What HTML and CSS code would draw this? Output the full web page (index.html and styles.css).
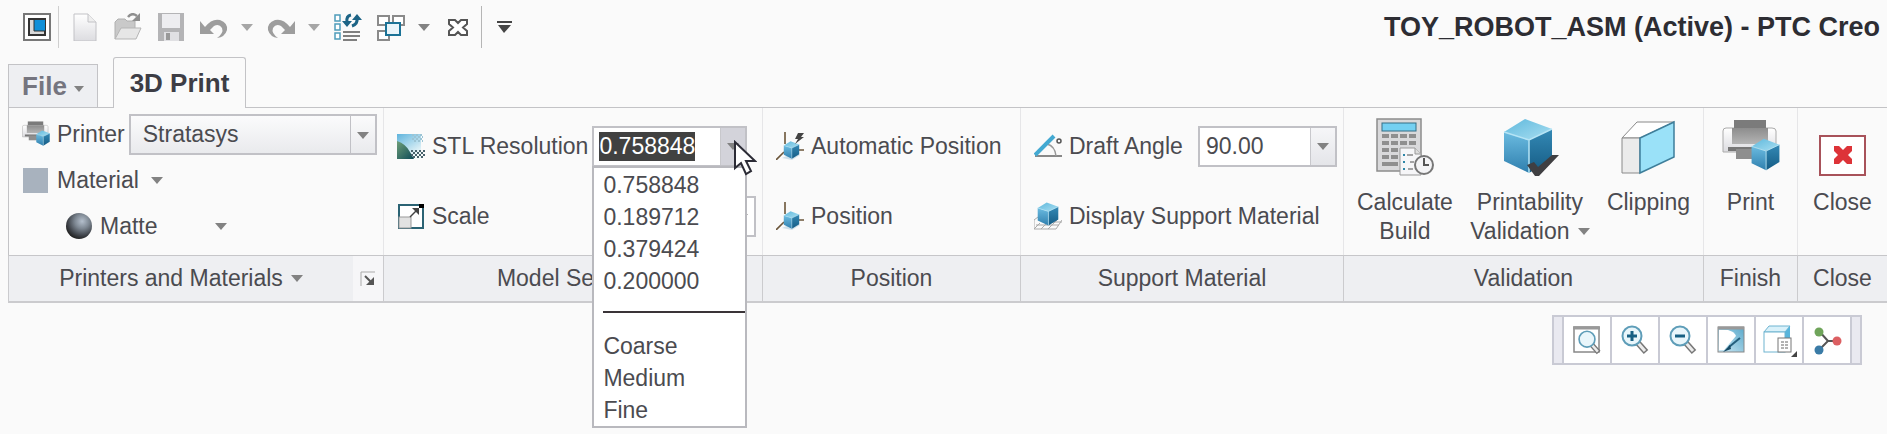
FILE: index.html
```html
<!DOCTYPE html>
<html lang="en">
<head>
  <meta charset="UTF-8">
  <title>TOY_ROBOT_ASM (Active) - PTC Creo</title>
  <link rel="stylesheet" href="styles.css">
</head>
<body>

<!-- shared shapes -->
<svg class="defs" aria-hidden="true">
  <defs>
    <linearGradient id="gTop" x1="0" y1="0" x2="1" y2="1"><stop offset="0" stop-color="#5fb8dc"/><stop offset="1" stop-color="#a9dff2"/></linearGradient>
    <linearGradient id="gLeft" x1="0" y1="0" x2="0" y2="1"><stop offset="0" stop-color="#6bbbe0"/><stop offset="1" stop-color="#2f7fae"/></linearGradient>
    <linearGradient id="gRight" x1="0" y1="0" x2="0" y2="1"><stop offset="0" stop-color="#3489b5"/><stop offset="1" stop-color="#155c85"/></linearGradient>
    <linearGradient id="gGrey" x1="0" y1="0" x2="0" y2="1"><stop offset="0" stop-color="#8d8d8d"/><stop offset="1" stop-color="#b4b4b4"/></linearGradient>
    <linearGradient id="gLight" x1="0" y1="0" x2="0" y2="1"><stop offset="0" stop-color="#ffffff"/><stop offset="1" stop-color="#dcdce0"/></linearGradient>
    <linearGradient id="gSky" x1="0" y1="0" x2="0.6" y2="1"><stop offset="0" stop-color="#5fb4dd"/><stop offset="1" stop-color="#f2fafa"/></linearGradient>
    <linearGradient id="gHill" x1="0" y1="0" x2="1" y2="1"><stop offset="0" stop-color="#6f9f78"/><stop offset="1" stop-color="#0d4a58"/></linearGradient>
    <linearGradient id="gPane" x1="0" y1="1" x2="1" y2="0"><stop offset="0" stop-color="#cfeaf5"/><stop offset="1" stop-color="#5aa9cb"/></linearGradient>
    <radialGradient id="gBall" cx="0.62" cy="0.32" r="0.7"><stop offset="0" stop-color="#b4bfcc"/><stop offset="0.4" stop-color="#7d8792"/><stop offset="0.8" stop-color="#3c4046"/><stop offset="1" stop-color="#222"/></radialGradient>
    <symbol id="cube" viewBox="0 0 50 56">
      <path d="M22 1 49 11 26 22 1 14Z" fill="url(#gTop)"/>
      <path d="M1 14 26 22V55L1 43Z" fill="url(#gLeft)"/>
      <path d="M26 22 49 11V41L26 55Z" fill="url(#gRight)"/>
      <path d="M1 14 26 22 49 11M26 22V55" fill="none" stroke="#b5e4f5" stroke-width="1.5"/>
    </symbol>
    <symbol id="printer" viewBox="0 0 58 52">
      <path d="M1 11Q1 8 4 8H50Q54 8 54 11V32H1Z" fill="url(#gLight)" stroke="#aaa"/>
      <rect x="12" y="0" width="32" height="8" fill="#7b7b7b"/>
      <rect x="10" y="8" width="36" height="16" fill="url(#gGrey)"/>
      <rect x="6" y="27" width="40" height="4" fill="#777"/>
      <rect x="14" y="29" width="28" height="10" fill="#8e8e8e"/>
      <use href="#cube" x="29" y="18" width="29" height="33"/>
    </symbol>
    <symbol id="lens" viewBox="0 0 30 30">
      <path d="M18 18 26 27" stroke="#777" stroke-width="6"/>
      <path d="M18 18 25 26" stroke="#ececec" stroke-width="3"/>
      <circle cx="12" cy="11" r="9.5" fill="#e9f6fb" stroke="#5e9db8" stroke-width="2"/>
    </symbol>
    <symbol id="axes" viewBox="0 0 28 28">
      <path d="M9 0V12M0 28 8 20M20 18H28" stroke="#6b563a" stroke-width="1.6" fill="none"/>
      <path d="M6 26 16 28 24 23 20 20Z" fill="#cfe0ea"/>
      <use href="#cube" x="7" y="9" width="17" height="18"/>
    </symbol>
    <symbol id="turn" viewBox="0 0 28 28">
      <path d="M5 14Q12 5 20 7Q28 10 27 17Q25 24 17 25Q24 20 22 15Q19 10 14 13L10 17L14 21H0V8Z" fill="#9d9d9d"/>
    </symbol>
  </defs>
</svg>

<header class="topbar">
  <div class="quick">
    <button type="button" class="qbtn" aria-label="Window">
      <svg width="28" height="28" viewBox="0 0 28 28"><rect x="1" y="1" width="26" height="26" fill="#fff" stroke="#777" stroke-width="2"/><rect x="6" y="6" width="16" height="16" fill="#d9d9d9" stroke="#333" stroke-width="2"/><rect x="11" y="7" width="11" height="11" fill="#0f8fd8"/><path d="M11 6V18H22" fill="none" stroke="#333"/></svg>
    </button>
    <span class="sep"></span>
    <button type="button" class="qbtn" aria-label="New">
      <svg width="28" height="28" viewBox="0 0 28 28"><path d="M3 1H17L25 9V28H3Z" fill="url(#gLight)" stroke="#c2c2c6"/><path d="M17 1V9H25" fill="#eee" stroke="#c2c2c6"/></svg>
    </button>
    <button type="button" class="qbtn" aria-label="Open">
      <svg width="28" height="28" viewBox="0 0 28 28"><path d="M1 26V9L4 6H11L13 8H21V15" fill="#c9c9c9" stroke="#b0b0b0"/><path d="M1 26 7 15H27L22 26Z" fill="#e6e6e6" stroke="#b5b5b5"/><path d="M14 4Q18 -1 23 3" fill="none" stroke="#8f8f8f" stroke-width="2.500"/><path d="M26 0V8H18Z" fill="#8f8f8f"/></svg>
    </button>
    <button type="button" class="qbtn" aria-label="Save">
      <svg width="28" height="28" viewBox="0 0 28 28"><path d="M1 0H27V28H1Z" fill="#b4b4b6"/><rect x="5" y="1" width="18" height="14" fill="#ededf0"/><rect x="7" y="19" width="15" height="9" fill="#e0e0e3"/><rect x="9" y="20" width="4" height="7" fill="#999"/></svg>
    </button>
    <button type="button" class="qbtn" aria-label="Undo">
      <svg width="28" height="28" viewBox="0 0 28 28"><use href="#turn" width="28" height="28"/></svg>
    </button>
    <button type="button" class="qdrop" aria-label="Undo list"><span class="caret light"></span></button>
    <button type="button" class="qbtn" aria-label="Redo">
      <svg width="28" height="28" viewBox="0 0 28 28"><g transform="matrix(-1 0 0 1 28 0)"><use href="#turn" width="28" height="28"/></g></svg>
    </button>
    <button type="button" class="qdrop" aria-label="Redo list"><span class="caret light"></span></button>
    <button type="button" class="qbtn" aria-label="Regenerate">
      <svg width="28" height="28" viewBox="0 0 28 28"><g fill="#fff" stroke="#4e9cba" stroke-width="1.500"><rect x="1" y="2" width="5" height="6"/><rect x="1" y="11" width="5" height="6"/><rect x="1" y="20" width="5" height="6"/></g><path d="M9 19H26M9 23H26M9 27H23" stroke="#7f7f7f" stroke-width="2"/><path d="M13 9Q12 3 17 2M23 5Q24 11 18 13" fill="none" stroke="#1d6486" stroke-width="3"/><path d="M8 8H18L13 14ZM18 7H28L23 1Z" fill="#1d6486"/></svg>
    </button>
    <button type="button" class="qbtn" aria-label="Windows">
      <svg width="28" height="28" viewBox="0 0 28 28"><g fill="#fff" stroke="#8a8a8a" stroke-width="2"><rect x="1" y="3" width="11" height="9"/><rect x="16" y="3" width="11" height="9"/><rect x="1" y="18" width="11" height="9"/></g><rect x="9" y="10" width="14" height="12" fill="#eaf5fa" stroke="#1b7296" stroke-width="2"/></svg>
    </button>
    <button type="button" class="qdrop" aria-label="Window list"><span class="caret"></span></button>
    <button type="button" class="qbtn" aria-label="Close window">
      <svg width="28" height="28" viewBox="0 0 28 28"><path d="M5 7H11L14 10 17 7H23V11L19 14.500 23 18V22H17L14 19 11 22H5V18L9 14.500 5 11Z" fill="#fff" stroke="#555" stroke-width="2"/></svg>
    </button>
    <span class="sep last"></span>
    <button type="button" class="qdrop" aria-label="Customize toolbar">
      <svg width="18" height="14" viewBox="0 0 18 14"><path d="M2 2H17" stroke="#444" stroke-width="2"/><path d="M3 5H16L9 13Z" fill="#444"/></svg>
    </button>
  </div>
  <h1 class="title">TOY_ROBOT_ASM (Active) - PTC Creo</h1>
</header>

<nav class="tabs">
  <button type="button" class="tab file">File<span class="caret small"></span></button>
  <button type="button" class="tab active">3D Print</button>
</nav>

<main>
  <div class="ribbon">
    <section class="group first">
      <div class="body">
        <div class="row short">
          <label class="item" for="printer-name">
            <svg width="28" height="28" viewBox="0 0 58 58"><use href="#printer" width="58" height="58"/></svg>Printer
          </label>
          <span class="combo wide grey">
            <select id="printer-name"><option>Stratasys</option></select>
          </span>
        </div>
        <div class="row short">
          <button type="button" class="item"><span class="swatch"></span>Material<span class="caret after"></span></button>
        </div>
        <div class="row short indent">
          <button type="button" class="item">
            <svg width="28" height="28" viewBox="0 0 28 28"><circle cx="14" cy="14" r="13" fill="url(#gBall)"/></svg><span class="finish">Matte</span><span class="caret"></span>
          </button>
        </div>
      </div>
      <div class="foot">
        <button type="button" class="foot-label">Printers and Materials<span class="caret"></span></button>
        <button type="button" class="launcher" aria-label="More printer settings">
          <svg width="16" height="16" viewBox="0 0 16 16"><path d="M1 15V1H15" fill="none" stroke="#aaa"/><path d="M5 5 11 11" stroke="#555" stroke-width="2"/><path d="M14 6V14H6Z" fill="#555"/></svg>
        </button>
      </div>
    </section>

    <section class="group">
      <div class="body">
        <div class="row">
          <label class="item" for="stl">
            <svg width="28" height="28" viewBox="0 0 28 28"><rect y="2" width="24" height="25" fill="url(#gSky)"/><path d="M0 9Q9 12 13 20L17 27H0Z" fill="url(#gHill)"/><g stroke="#48626c" stroke-dasharray="2 2"><path d="M15 3H26M15 7H26M17 5H26M17 9H26" stroke="#9cc4d4" stroke-width="2"/><path d="M14 19H28M16 21H28M14 23H28M16 25H28" stroke-width="2"/></g></svg>STL Resolution
          </label>
          <span class="combo stl">
            <input type="text" id="stl" value="0.758848">
            <button type="button" class="combo-btn" aria-label="Show resolutions"><span class="caret"></span></button>
            <ul class="list" role="listbox" aria-label="STL Resolution">
              <li role="option">0.758848</li>
              <li role="option">0.189712</li>
              <li role="option">0.379424</li>
              <li role="option">0.200000</li>
              <li class="rule" role="separator"></li>
              <li role="option">Coarse</li>
              <li role="option">Medium</li>
              <li role="option">Fine</li>
            </ul>
            <svg class="pointer" width="24" height="36" viewBox="0 0 24 36"><path d="M2 2V28L8 23 13 34 18 31 13 21H22Z" fill="#fff" stroke="#2c2c36" stroke-width="2"/></svg>
          </span>
        </div>
        <div class="row">
          <label class="item" for="scale">
            <svg width="28" height="28" viewBox="0 0 28 28"><rect x="2" y="3" width="24" height="23" fill="#fff" stroke="#2b6374" stroke-width="2"/><rect x="2" y="15" width="12" height="11" fill="#e2e2e2" stroke="#999"/><path d="M13 15 20 8" stroke="#444" stroke-width="1.500"/><path d="M15 6H22V13Z" fill="#444"/><rect x="22" y="2" width="5" height="4" fill="#000"/></svg>Scale
          </label>
          <span class="combo stl end">
            <select id="scale"></select>
          </span>
        </div>
      </div>
      <div class="foot"><span class="foot-label">Model Settings</span></div>
    </section>

    <section class="group">
      <div class="body">
        <div class="row">
          <button type="button" class="item">
            <svg width="28" height="28" viewBox="0 0 28 28"><use href="#axes" width="28" height="28"/><path d="M22 1H28L25 5H28L19 12 22 7H19Z" fill="#444"/></svg>Automatic Position
          </button>
        </div>
        <div class="row">
          <button type="button" class="item">
            <svg width="28" height="28" viewBox="0 0 28 28"><use href="#axes" width="28" height="28"/></svg>Position
          </button>
        </div>
      </div>
      <div class="foot"><span class="foot-label">Position</span></div>
    </section>

    <section class="group">
      <div class="body">
        <div class="row">
          <label class="item" for="draft">
            <svg width="28" height="28" viewBox="0 0 28 28"><path d="M1 24H28" stroke="#888" stroke-width="2"/><path d="M13 12Q21 14 22 24" fill="none" stroke="#999" stroke-width="1.500"/><path d="M1 23 20 4" stroke="#43a9d2" stroke-width="4"/><circle cx="25" cy="9" r="2" fill="none" stroke="#555" stroke-width="1.500"/></svg>Draft Angle
          </label>
          <span class="combo draft end">
            <input type="text" id="draft" value="90.00">
            <button type="button" class="combo-btn" aria-label="Show angles"><span class="caret"></span></button>
          </span>
        </div>
        <div class="row">
          <button type="button" class="item">
            <svg width="28" height="28" viewBox="0 0 28 28"><path d="M4 15 0 18V27H22L28 18M0 27 6 21M7 27 14 20M14 27 24 17M2 23H25M18 20H28" fill="none" stroke="#aaa"/><use href="#cube" x="1" y="0" width="26" height="24"/></svg>Display Support Material
          </button>
        </div>
      </div>
      <div class="foot"><span class="foot-label">Support Material</span></div>
    </section>

    <section class="group">
      <div class="body tools">
        <button type="button" class="tool">
          <svg width="58" height="58" viewBox="0 0 58 58">
            <rect x="1" y="1" width="44" height="52" fill="#d9d9db" stroke="#8c8c8c" stroke-width="1.500"/>
            <rect x="6" y="5" width="34" height="8" fill="#74d0f2" stroke="#356e86"/>
            <g fill="#8f8f8f"><path d="M6 16h7v4H6zM15 16h7v4h-7zM24 16h7v4h-7zM33 16h7v4h-7zM6 23h7v4H6zM15 23h7v4h-7zM24 23h7v4h-7zM33 23h7v4h-7zM6 30h7v4H6zM15 30h7v4h-7zM6 37h7v4H6zM15 37h7v4h-7zM6 44h16v4H6z"/></g>
            <path d="M24 30H39L45 36V57H24Z" fill="#f6f6f8" stroke="#999"/><path d="M39 30V36H45" fill="#ddd" stroke="#999"/>
            <path d="M27 37H29M27 44H29M27 51H29" stroke="#2e86a8" stroke-width="2"/><path d="M31 37H37M34 44H38M32 51H37" stroke="#888" stroke-width="1.500"/>
            <circle cx="48" cy="47" r="9" fill="#f4f4f6" stroke="#777" stroke-width="2"/><path d="M48 40V47H53" fill="none" stroke="#555" stroke-width="2"/>
          </svg>
          <span>Calculate<br>Build</span>
        </button>
        <button type="button" class="tool">
          <svg width="58" height="58" viewBox="0 0 58 58"><use href="#cube" x="2" y="0" width="50" height="56"/><path d="M26 47 33 44 37 49 51 37H58L38 58H34Z" fill="#3f3f42"/></svg>
          <span>Printability<br>Validation<span class="caret inline"></span></span>
        </button>
        <button type="button" class="tool">
          <svg width="58" height="58" viewBox="0 0 58 58"><path d="M3 20 18 4H55L21 20Z" fill="#fff" stroke="#8a8a8a"/><path d="M3 20H21V55H3Z" fill="#ebebeb" stroke="#8a8a8a"/><path d="M21 20 55 4V39L21 55Z" fill="#9ae1f8" stroke="#3e7e9a" stroke-width="1.500"/></svg>
          <span>Clipping</span>
        </button>
      </div>
      <div class="foot"><span class="foot-label">Validation</span></div>
    </section>

    <section class="group">
      <div class="body tools single">
        <button type="button" class="tool">
          <svg width="58" height="58" viewBox="0 0 58 58"><use href="#printer" y="2" width="58" height="52"/></svg>
          <span>Print</span>
        </button>
      </div>
      <div class="foot"><span class="foot-label">Finish</span></div>
    </section>

    <section class="group">
      <div class="body tools single">
        <button type="button" class="tool">
          <svg width="58" height="58" viewBox="0 0 58 58"><rect x="6" y="18" width="45" height="39" fill="#fff" stroke="#a8525a" stroke-width="2"/><path d="M20 28H25L29 32 33 28H38V33L34 37 38 41V46H33L29 42 25 46H20V41L24 37 20 33Z" fill="#dd3338"/></svg>
          <span>Close</span>
        </button>
      </div>
      <div class="foot"><span class="foot-label">Close</span></div>
    </section>
  </div>

  <div class="canvas">
    <div class="view-bar" role="toolbar" aria-label="View">
      <span class="grip"></span>
      <button type="button" aria-label="Refit">
        <svg width="30" height="30" viewBox="0 0 30 30"><rect x="2" y="2" width="25" height="25" fill="#fff" stroke="#888" stroke-width="1.500"/><path d="M1 3H28" stroke="#999" stroke-width="3"/><use href="#lens" x="5" y="5" width="25" height="25"/></svg>
      </button>
      <button type="button" aria-label="Zoom in">
        <svg width="30" height="30" viewBox="0 0 30 30"><use href="#lens" width="30" height="30"/><path d="M12 6V16M7 11H17" stroke="#186083" stroke-width="3"/></svg>
      </button>
      <button type="button" aria-label="Zoom out">
        <svg width="30" height="30" viewBox="0 0 30 30"><use href="#lens" width="30" height="30"/><path d="M7 11H17" stroke="#186083" stroke-width="3"/></svg>
      </button>
      <button type="button" aria-label="Repaint">
        <svg width="30" height="30" viewBox="0 0 30 30"><rect x="2" y="2" width="26" height="25" fill="url(#gPane)" stroke="#888"/><path d="M2 3H28" stroke="#999" stroke-width="3"/><path d="M3 5H12Q19 7 20 11L8 25H3Z" fill="#fff"/><path d="M24 13 13 22" stroke="#245f7d" stroke-width="2"/><path d="M14 20 15 24 7 27Z" fill="#174a65"/></svg>
      </button>
      <button type="button" aria-label="Display style">
        <svg width="36" height="34" viewBox="0 0 36 34"><path d="M3 9 8 3H29L24 9Z" fill="#d9f1fa" stroke="#6fb4d0"/><path d="M24 9 29 3V24L24 29Z" fill="#58b5dc"/><rect x="3" y="9" width="21" height="20" fill="#fff" stroke="#6fb4d0"/><rect x="17" y="15" width="13" height="14" fill="#fff" stroke="#777"/><path d="M20 19H27M20 22H27M20 25H27" stroke="#666" stroke-dasharray="3 1"/><path d="M36 28V34H30Z" fill="#444"/></svg>
      </button>
      <button type="button" aria-label="Datum display">
        <svg width="30" height="30" viewBox="0 0 30 30"><path d="M7 6 16 16 7 25M16 16H24" fill="none" stroke="#555" stroke-width="2"/><circle cx="7" cy="7" r="4.500" fill="#6fa45a"/><circle cx="25" cy="16" r="4.500" fill="#dc5f62"/><circle cx="7" cy="25" r="4.500" fill="#3a7ba6"/></svg>
      </button>
      <span class="grip"></span>
    </div>
  </div>
</main>

<script>
  // open with the current resolution selected, ready to overwrite
  const stl = document.getElementById('stl');
  stl.focus();
  stl.select();
</script>

</body>
</html>
```

FILE: styles.css
```css
* {
  box-sizing: border-box;
}
body {
  margin: 0;
  min-height: 100vh;
  background: #fafafa;
  color: #4b4b50;
  font-family: "Liberation Sans", Arial, sans-serif;
  font-size: 23px;
  line-height: 29px;
}
button, input, select {
  font: inherit;
  color: inherit;
  background: none;
  border: 0;
  border-radius: 0;
  padding: 0;
  margin: 0;
  outline: none;
}
svg {
  display: block;
  flex: none;
}
.defs {
  position: absolute;
  width: 0;
  height: 0;
}
.caret {
  flex: none;
  border: 6px solid transparent;
  border-top: 7px solid #828282;
  border-bottom: 0;
}
.caret.light {
  border-top-color: #a6a6a6;
}
.caret.small {
  border-width: 6px 5px 0;
  margin: 6px 0 0 7px;
}
.caret.after {
  margin-left: 5px;
}
.caret.inline {
  display: inline-block;
  margin: 0 0 4px 8px;
}

/* title row */
.topbar {
  display: flex;
  align-items: center;
  justify-content: space-between;
  height: 54px;
  padding: 0 7px 0 15px;
}
.quick {
  display: flex;
  align-items: center;
}
.qbtn, .qdrop {
  display: flex;
  align-items: center;
  justify-content: center;
  width: 43px;
  height: 42px;
}
.qdrop {
  width: 24px;
}
.sep {
  width: 1px;
  height: 42px;
  margin-right: 4px;
  background: #cfcfcf;
}
.sep.last {
  margin: 0 10px 0 2px;
  background: #b5b5b5;
}
.title {
  margin: 0;
  font-size: 27px;
  color: #2d2d33;
  white-space: nowrap;
}

/* tabs */
.tabs {
  display: flex;
  align-items: flex-end;
  height: 53px;
  padding-left: 8px;
}
.tab {
  display: flex;
  align-items: center;
  justify-content: center;
  height: 43px;
  font-size: 26px;
  font-weight: bold;
  border: 1px solid #c3c3c6;
}
.tab.file {
  width: 90px;
  margin-right: 15px;
  background: #eeeff2;
  color: #75757f;
  border-bottom: 0;
}
.tab.active {
  position: relative;
  width: 133px;
  height: 51px;
  margin-bottom: -1px;
  background: #fafafa;
  color: #3d3d45;
  border-bottom: 0;
  border-radius: 3px 3px 0 0;
}

/* ribbon */
.ribbon {
  display: grid;
  grid-template-columns: 375fr 379fr 258fr 323fr 360fr 94fr 90fr;
  margin-left: 8px;
  border-top: 1px solid #c3c3c6;
  border-bottom: 2px solid #cbcbce;
  white-space: nowrap;
}
.body {
  height: 147px;
  padding: 3px 6px 0 13px;
  border-left: 1px solid #e6e6e8;
}
.first .body {
  border-left-color: #c3c3c6;
}
.row {
  display: flex;
  align-items: center;
  gap: 4px;
  height: 70px;
}
.row.short {
  height: 46px;
}
.row.indent {
  padding-left: 43px;
}
.item {
  display: flex;
  align-items: center;
  gap: 7px;
}
.swatch {
  width: 25px;
  height: 25px;
  margin: 0 2px 0 1px;
  background: #a8b2be;
}
.finish {
  width: 108px;
  text-align: left;
}
.foot {
  display: flex;
  height: 46px;
  background: #eeeff2;
  border-top: 1px solid #c6c6c9;
  border-left: 1px solid #cbcbce;
}
.foot-label {
  display: flex;
  flex: 1;
  align-items: center;
  justify-content: center;
  gap: 8px;
}
.launcher {
  display: flex;
  align-items: center;
  justify-content: center;
  width: 30px;
  background: #f6f6f8;
}

/* combo boxes */
.combo {
  position: relative;
  display: flex;
  height: 41px;
  background: #fff;
  border: 2px solid #c1c1c6;
}
.combo input, .combo select {
  flex: 1;
  width: 0;
  min-width: 0;
  padding-left: 6px;
}
.combo select {
  appearance: none;
  padding-left: 12px;
}
.combo.wide {
  flex: 1;
}
.combo.grey {
  background: linear-gradient(#fbfbfc, #e9eaed);
}
.combo.end {
  margin-left: auto;
}
.combo.stl {
  width: 155px;
}
.combo.draft {
  width: 139px;
}
.combo-btn {
  display: flex;
  align-items: center;
  justify-content: center;
  width: 25px;
  background: linear-gradient(#f6f6f8, #e4e5e9);
  border-left: 1px solid #c8c8cc;
}
.stl .combo-btn {
  background: #d3d3da;
}
/* arrow box for the plain selects */
.combo:has(select)::after {
  content: "";
  position: absolute;
  right: 6px;
  top: 16px;
  border: 6px solid transparent;
  border-top: 7px solid #828282;
  border-bottom: 0;
  pointer-events: none;
}
.combo:has(select)::before {
  content: "";
  position: absolute;
  right: 24px;
  top: 0;
  bottom: 0;
  border-left: 1px solid #c1c1c6;
}
#stl {
  padding-left: 5px;
}
#stl::selection {
  background: #414141;
  color: #fff;
}
.list {
  position: absolute;
  z-index: 1;
  top: 38px;
  left: -2px;
  right: -2px;
  margin: 0;
  padding: 1px 0 0 9px;
  list-style: none;
  line-height: 32px;
  background: #fff;
  border: 2px solid #b9b9be;
}
.rule {
  height: 33px;
  padding-top: 14px;
}
.rule::after {
  content: "";
  display: block;
  height: 2px;
  background: #3a3438;
}
.pointer {
  position: absolute;
  z-index: 2;
  left: 139px;
  top: 12px;
}

/* big buttons */
.tools {
  display: flex;
  justify-content: space-between;
  align-items: flex-start;
  padding: 10px 13px 0;
}
.tools.single {
  justify-content: center;
  padding: 10px 0 0;
}
.tool {
  display: flex;
  flex-direction: column;
  align-items: center;
  gap: 12px;
}

/* graphics area */
.canvas {
  display: flex;
  justify-content: flex-end;
  padding: 12px 25px;
}
.view-bar {
  display: flex;
  height: 50px;
  background: #fff;
  border: 2px solid #c9cad4;
}
.view-bar button {
  display: flex;
  align-items: center;
  justify-content: center;
  width: 48px;
  border-left: 2px solid #c9cad4;
}
.grip {
  width: 8px;
  background: #e9e9f0;
}
.grip:last-child {
  width: 10px;
  border-left: 2px solid #c9cad4;
}
```
